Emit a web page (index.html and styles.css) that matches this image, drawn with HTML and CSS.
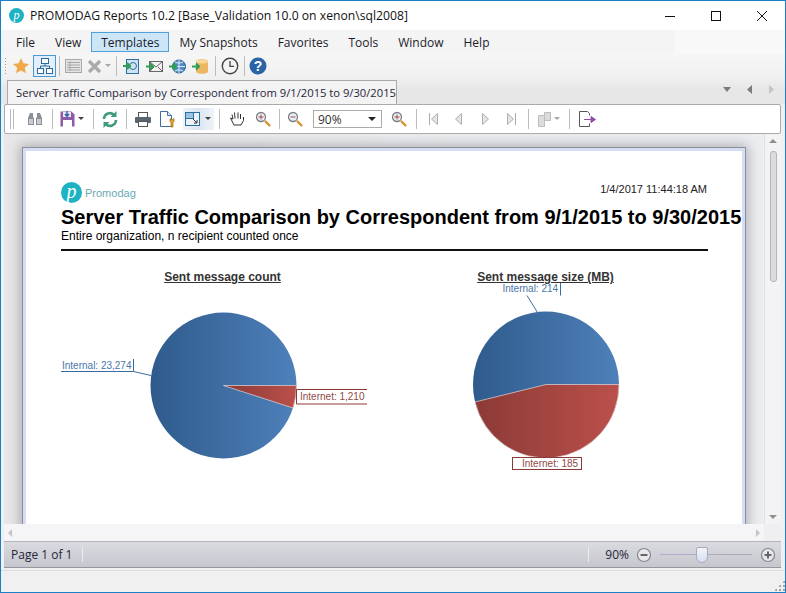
FILE: index.html
```html
<!DOCTYPE html>
<html lang="en">
<head>
<meta charset="utf-8">
<title>PROMODAG Reports</title>
<link rel="stylesheet" href="styles.css">
</head>
<body>
<div class="window">
  <header class="titlebar">
    <span class="app-logo">p</span>
    <span class="app-title">PROMODAG Reports 10.2 [Base_Validation 10.0 on xenon\sql2008]</span>
    <div class="win-buttons">
      <svg class="win-btn" width="46" height="29" viewBox="0 0 46 29"><path d="M18 15.5h10" stroke="#111" fill="none"/></svg>
      <svg class="win-btn" width="46" height="29" viewBox="0 0 46 29"><rect x="18.5" y="10.5" width="9" height="9" stroke="#111" fill="none"/></svg>
      <svg class="win-btn" width="46" height="29" viewBox="0 0 46 29"><path d="M18 10l10 10M28 10L18 20" stroke="#111" fill="none"/></svg>
    </div>
  </header>

  <nav class="menubar">
    <span class="menu-item">File</span>
    <span class="menu-item">View</span>
    <span class="menu-item active">Templates</span>
    <span class="menu-item">My Snapshots</span>
    <span class="menu-item">Favorites</span>
    <span class="menu-item">Tools</span>
    <span class="menu-item">Window</span>
    <span class="menu-item">Help</span>
  </nav>

  <div class="toolbar-main">
    <span class="grip-dots"></span>
    <span class="btn w24"><svg width="18" height="18" viewBox="0 0 18 18"><path d="M9 1l2.4 5.3 5.6.6-4.2 3.8 1.2 5.6L9 13.5 4 16.3l1.2-5.6L1 6.9l5.6-.6z" fill="#f0a94a"/></svg></span>
    <span class="btn w23 selected"><svg width="18" height="18" viewBox="0 0 18 18" fill="#fff" stroke="#2c6a9e"><rect x="5.5" y="1.5" width="7" height="5"/><rect x="1.5" y="11.5" width="6" height="5"/><rect x="10.5" y="11.5" width="6" height="5"/><path d="M9 6.5v2.5M4.5 11.5V9h9v2.5" fill="none"/></svg></span>
    <span class="sep s7"></span>
    <span class="btn w20"><svg width="17" height="16" viewBox="0 0 17 16"><rect x=".5" y="1.5" width="16" height="13" fill="#e4e4e4" stroke="#a8a8a8"/><path d="M2 4.5h13M2 7h13M2 9.5h13M2 12h13M5 3v10" stroke="#a8a8a8" fill="none"/></svg></span>
    <span class="btn w22"><svg width="15" height="15" viewBox="0 0 15 15"><path d="M2 2l11 11M13 2L2 13" stroke="#ababab" stroke-width="3.4" fill="none"/></svg></span>
    <span class="drop w7 muted"></span>
    <span class="sep s8"></span>
    <span class="btn w23"><svg width="17" height="17" viewBox="0 0 17 17"><rect x="3.5" y="1.5" width="12" height="14" fill="#cfe3f2" stroke="#2d6f9c"/><circle cx="10" cy="8" r="3.5" fill="none" stroke="#2d6f9c"/><path d="M0 8h6M4 5l3 3-3 3" stroke="#2e9e55" stroke-width="2" fill="none"/></svg></span>
    <span class="btn w23"><svg width="17" height="17" viewBox="0 0 17 17"><rect x="3.5" y="3.5" width="13" height="10" fill="#f2f2f2" stroke="#666"/><path d="M4 4l6 5 6-5M4 13l4-4M16 13l-4-4" stroke="#666" fill="none"/><path d="M0 8.500h6M4 5.500l3 3-3 3" stroke="#2e9e55" stroke-width="2" fill="none"/></svg></span>
    <span class="btn w23"><svg width="17" height="17" viewBox="0 0 17 17"><circle cx="10" cy="8.500" r="6.500" fill="#4f8cc4" stroke="#2a5f94"/><path d="M4 8.500h12M10 2v13M6 4c2.500 1.500 5.500 1.500 8 0M6 13c2.500-1.500 5.500-1.500 8 0" stroke="#dcecf8" fill="none"/><path d="M0 8.500h6M4 5.500l3 3-3 3" stroke="#2e9e55" stroke-width="2" fill="none"/></svg></span>
    <span class="btn w23"><svg width="17" height="17" viewBox="0 0 17 17"><path d="M4 3.500c0-3 12-3 12 0v10c0 3-12 3-12 0z" fill="#eeb562"/><ellipse cx="10" cy="3.500" rx="6" ry="2" fill="#f7d79e"/><path d="M0 8.500h6M4 5.500l3 3-3 3" stroke="#2e9e55" stroke-width="2" fill="none"/></svg></span>
    <span class="sep s7"></span>
    <span class="btn w22"><svg width="18" height="18" viewBox="0 0 18 18"><circle cx="9" cy="9" r="7.700" fill="#f4f4f4" stroke="#444" stroke-width="1.400"/><path d="M9 4v5.300h4" stroke="#444" stroke-width="1.300" fill="none"/></svg></span>
    <span class="sep s7"></span>
    <span class="btn w20"><svg width="18" height="18" viewBox="0 0 18 18"><circle cx="9" cy="9" r="8.500" fill="#2a64a6"/><text x="9" y="14" class="help-q">?</text></svg></span>
  </div>

  <div class="tabstrip">
    <div class="tab">
      <span class="tab-text">Server Traffic Comparison by Correspondent from 9/1/2015 to 9/30/2015</span>
      <svg width="10" height="10" viewBox="0 0 10 10"><path d="M1.500 1.500l7 7M8.500 1.500l-7 7" stroke="#8a8a8a" stroke-width="2.200" fill="none"/></svg>
    </div>
    <div class="tab-nav">
      <svg width="10" height="6" viewBox="0 0 10 6"><path d="M1 0h8L5 5z" fill="#7c7c7c"/></svg>
      <svg width="6" height="10" viewBox="0 0 6 10"><path d="M5 0v9L0 4.500z" fill="#7c7c7c"/></svg>
      <svg width="6" height="10" viewBox="0 0 6 10"><path d="M1 0v9l5-4.500z" fill="#c4c4c4"/></svg>
    </div>
  </div>

  <div class="toolbar-report">
    <span class="grip-lines"></span>
    <span class="btn w26"><svg width="16" height="16" viewBox="0 0 16 16"><path d="M3 2h3v4l1 1v7H1V7zM10 2h3l2 5v7H9V7l1-1z" fill="#8b8f96"/><path d="M2 8h4v5H2zM10 8h4v5h-4z" fill="#c8ccd2"/></svg></span>
    <span class="sep s8"></span>
    <span class="btn w22"><svg width="15" height="16" viewBox="0 0 15 16"><path d="M.5.500h11l3 3v12H.500z" fill="#8e5aa8"/><rect x="3" y="1" width="8" height="5" fill="#efe6f4"/><rect x="3" y="9" width="9" height="7" fill="#fff"/><path d="M7 0v4M5 3l2 2.500L9 3" stroke="#2a64a6" stroke-width="1.400" fill="none"/></svg></span>
    <span class="drop w7"></span>
    <span class="sep s16"></span>
    <span class="btn w18"><svg width="16" height="17" viewBox="0 0 16 17"><path d="M2 8a6 6 0 0 1 10.500-3.800M14 9a6 6 0 0 1-10.500 3.800" stroke="#3f9c7a" stroke-width="2.600" fill="none"/><path d="M14.500 0v6h-6zM1.500 17v-6h6z" fill="#3f9c7a"/></svg></span>
    <span class="sep s14"></span>
    <span class="btn w20"><svg width="16" height="15" viewBox="0 0 16 15"><rect x="3.500" y=".5" width="9" height="5" fill="#fff" stroke="#555"/><rect y="5" width="16" height="6" rx="1" fill="#5a6672"/><rect x="3.500" y="9.500" width="9" height="5" fill="#fff" stroke="#555"/></svg></span>
    <span class="btn w30"><svg width="17" height="17" viewBox="0 0 17 17"><path d="M.5.500h7l4 4v11H.500z" fill="#fff" stroke="#3a6ea5"/><path d="M7.500.500v4h4" fill="#dce9f5" stroke="#3a6ea5"/><path d="M10 7.500l2 1.500 2-1.500v3l-1 1v4.500h-2v-4.500l-1-1z" fill="#e8a521" stroke="#9b6a12" stroke-width=".7"/></svg></span>
    <span class="btn w31 view-btn"><svg width="15" height="14" viewBox="0 0 15 14"><rect x=".5" y=".5" width="14" height="13" fill="#eaf2fa" stroke="#2d6f9c"/><rect x=".5" y=".5" width="8" height="6" fill="#9cc3e4" stroke="#2d6f9c"/><path d="M8 7l4 4M12 8v3H9" stroke="#333" fill="none"/></svg><span class="drop inner"></span></span>
    <span class="sep s10"></span>
    <span class="btn w26"><svg width="16" height="16" viewBox="0 0 16 16"><path d="M4 8L3 3.500M6 7.500L5.500 1.500M9 7.500V1.500M11.500 8V3M4 8L1.500 7 5 14h7l2.500-4.500V6" fill="#fff" stroke="#333"/></svg></span>
    <span class="btn w26"><svg width="16" height="16" viewBox="0 0 16 16"><circle cx="6" cy="6" r="4.500" fill="#e8eef5" stroke="#7a7f87" stroke-width="1.300"/><path d="M3.500 6h5M6 3.500v5" stroke="#b2473f" fill="none"/><path d="M10 10l5 5" stroke="#d8902c" stroke-width="2.400"/></svg></span>
    <span class="sep s6"></span>
    <span class="btn w26"><svg width="16" height="16" viewBox="0 0 16 16"><circle cx="6" cy="6" r="4.500" fill="#e8eef5" stroke="#7a7f87" stroke-width="1.300"/><path d="M3.500 6h5" stroke="#b2473f" fill="none"/><path d="M10 10l5 5" stroke="#d8902c" stroke-width="2.400"/></svg></span>
    <div class="combo"><span>90%</span><span class="combo-arrow"></span></div>
    <span class="btn w26 push4"><svg width="16" height="16" viewBox="0 0 16 16"><circle cx="6" cy="6" r="4.500" fill="#e8eef5" stroke="#7a7f87" stroke-width="1.300"/><path d="M3.500 6h5M6 3.500v5" stroke="#b2473f" fill="none"/><path d="M10 10l5 5" stroke="#d8902c" stroke-width="2.400"/></svg></span>
    <span class="sep s8"></span>
    <span class="btn w26"><svg width="9" height="12" viewBox="0 0 9 12"><path d="M.5 0v12" stroke="#aaa"/><path d="M8.500.5v11l-6-5.500z" fill="#e4e4e4" stroke="#b0b0b0"/></svg></span>
    <span class="btn w24"><svg width="7" height="12" viewBox="0 0 7 12"><path d="M6.500.5v11L.500 6z" fill="#e4e4e4" stroke="#b0b0b0"/></svg></span>
    <span class="btn w30"><svg width="7" height="12" viewBox="0 0 7 12"><path d="M.5.500v11l6-5.500z" fill="#e4e4e4" stroke="#b0b0b0"/></svg></span>
    <span class="btn w22"><svg width="9" height="12" viewBox="0 0 9 12"><path d="M8.500 0v12" stroke="#aaa"/><path d="M.5.500v11l6-5.500z" fill="#e4e4e4" stroke="#b0b0b0"/></svg></span>
    <span class="sep s12"></span>
    <span class="btn w20"><svg width="13" height="15" viewBox="0 0 13 15"><path d="M.5 3.500h6v11h-6zM6.500.5h6v8h-6z" fill="#dcdcdc" stroke="#bdbdbd"/></svg></span>
    <span class="drop w7 muted"></span>
    <span class="sep s16"></span>
    <span class="btn w20"><svg width="17" height="16" viewBox="0 0 17 16"><path d="M10.500 4.500V2.500l-2-2h-8v15h10v-3" fill="#fff" stroke="#555"/><path d="M5 8.500h7V5.500l4.500 3-4.500 3V9" fill="#8e4fa8" stroke="#8e4fa8"/></svg></span>
  </div>

  <main class="viewer">
    <div class="viewport">
      <article class="page">
        <div class="report-top">
          <div class="brand">
            <span class="brand-mark">p</span>
            <span class="brand-name">Promodag</span>
          </div>
          <span class="report-date">1/4/2017 11:44:18 AM</span>
        </div>
        <h1 class="report-title">Server Traffic Comparison by Correspondent from 9/1/2015 to 9/30/2015</h1>
        <p class="report-sub">Entire organization, n recipient counted once</p>
        <div class="charts">
          <section class="chart">
            <h2 class="chart-title">Sent message count</h2>
            <svg class="chart-svg" width="323" height="200" viewBox="0 0 323 200">
              <defs>
                <linearGradient id="blue1"><stop offset="0" stop-color="#2f5b8c"/><stop offset="1" stop-color="#4e80ba"/></linearGradient>
                <linearGradient id="red1"><stop offset="0" stop-color="#8c3a36"/><stop offset="1" stop-color="#bb504b"/></linearGradient>
              </defs>
              <circle cx="162.500" cy="101.500" r="73" fill="url(#blue1)"/>
              <path d="M162.500 101.500H235.500A73 73 0 0 1 232 124z" fill="url(#red1)" stroke="#e6d8d8" stroke-width=".7"/>
              <path d="M0 87.500H72.500V75M72.500 87.500L90 91.500" class="lead-blue"/>
              <text x="1" y="85" class="lab-blue">Internal: 23,274</text>
              <path d="M306 105.500H235.500V120H306" class="lead-red"/>
              <text x="239" y="116" class="lab-red">Internet: 1,210</text>
            </svg>
          </section>
          <section class="chart">
            <h2 class="chart-title">Sent message size (MB)</h2>
            <svg class="chart-svg" width="323" height="200" viewBox="0 0 323 200">
              <circle cx="162" cy="100.500" r="73" fill="url(#blue1)"/>
              <path d="M162 100.500H235A73 73 0 0 1 91 118z" fill="url(#red1)" stroke="#e6d8d8" stroke-width=".7"/>
              <path d="M176.500 -1V11.500M143 11.500L153.500 28.500" class="lead-blue"/>
              <text x="118.500" y="8" class="lab-blue">Internal: 214</text>
              <rect x="128.500" y="173.500" width="69" height="12" class="lead-red"/>
              <text x="138" y="183" class="lab-red">Internet: 185</text>
            </svg>
          </section>
        </div>
      </article>
    </div>
    <div class="vscroll">
      <span class="arrow-up"></span>
      <span class="v-thumb"></span>
      <span class="arrow-down"></span>
    </div>
    <div class="hscroll">
      <span class="arrow-left"></span>
      <span class="arrow-right"></span>
    </div>
    <div class="corner"></div>
  </main>

  <div class="statusbar">
    <span class="page-info">Page 1 of 1</span>
    <span class="status-sep"></span>
    <span class="status-fill"></span>
    <span class="status-sep"></span>
    <span class="zoom-val">90%</span>
    <svg width="16" height="16" viewBox="0 0 16 16"><circle cx="8" cy="8" r="6.500" fill="#e9e9ec" stroke="#85858c" stroke-width="1.200"/><path d="M4.500 8h7" stroke="#65656c" stroke-width="2"/></svg>
    <div class="slider"><span class="slider-thumb"></span></div>
    <svg width="16" height="16" viewBox="0 0 16 16"><circle cx="8" cy="8" r="6.500" fill="#e9e9ec" stroke="#85858c" stroke-width="1.200"/><path d="M4.500 8h7M8 4.500v7" stroke="#65656c" stroke-width="2"/></svg>
  </div>
  <footer class="bottombar"><span class="resize-grip"></span></footer>
</div>
</body>
</html>
```
FILE: styles.css
```css
* { box-sizing: border-box; }
html, body { margin: 0; padding: 0; }
body { width: 786px; height: 593px; overflow: hidden; background: #f0f0f0; }

.window {
  width: 786px; height: 593px;
  border: 1px solid #1a7fc6;
  display: flex; flex-direction: column;
  font-family: "Open Sans", "Noto Sans", sans-serif;
  font-size: 12px; color: #1c1c2a;
  background: #f0f0f0;
}

.titlebar { height: 29px; flex: none; display: flex; align-items: center; background: #fff; padding-left: 8px; }
.app-logo {
  width: 15px; height: 15px; border-radius: 50%;
  background: #1db3c4; color: #fff;
  font: italic 12px/14px "Liberation Serif", serif;
  text-align: center; flex: none;
}
.app-title { margin-left: 6px; white-space: nowrap; font-size: 12.2px; color: #111; }
.win-buttons { margin-left: auto; display: flex; margin-right: 0; }
.win-btn { display: block; }

.menubar { height: 24px; flex: none; display: flex; align-items: center; padding-left: 5px; background: linear-gradient(90deg, #f4f4f4 0 86%, #f8f8f8 86%); }
.menu-item { padding: 0 9px; height: 20px; line-height: 19px; border: 1px solid transparent; margin-right: 0; white-space: nowrap; }
.menu-item.active { background: #cde6f7; border-color: #4fa0dc; margin: 0; }

.toolbar-main { height: 24px; flex: none; display: flex; align-items: center; background: linear-gradient(#f6f6f6, #f0f0f0); }
.grip-dots { width: 8px; height: 18px; flex: none; margin-left: 0; background: radial-gradient(circle, #9c9c9c 0 1px, transparent 1px) 3px 0 / 3px 3px repeat-y; }

.btn { display: flex; align-items: center; justify-content: center; flex: none; height: 22px; }
.w18 { width: 18px; } .w20 { width: 20px; } .w22 { width: 22px; } .w23 { width: 23px; }
.w24 { width: 24px; } .w26 { width: 26px; } .w30 { width: 30px; } .w31 { width: 31px; }
.selected { background: #e3f0fb; border: 1px solid #4f97cf; }

.sep { height: 20px; flex: none; display: block; background: linear-gradient(#bcbcbc, #bcbcbc) center / 1px 100% no-repeat; }
.s6 { width: 6px; } .s7 { width: 7px; } .s8 { width: 8px; } .s10 { width: 10px; }
.s12 { width: 12px; } .s14 { width: 14px; } .s16 { width: 16px; }

.drop { height: 22px; flex: none; background: linear-gradient(135deg, #333 50%, transparent 50%) center / 0 0 no-repeat; position: relative; }
.w7 { width: 7px; }
.drop::after {
  content: ""; position: absolute; left: 0; top: 9px;
  border-left: 3.5px solid transparent; border-right: 3.5px solid transparent; border-top: 3.5px solid #404040;
}
.drop.muted::after { border-top-color: #a8a8a8; }
.drop.inner { width: 7px; margin-left: 5px; }

.help-q { font: bold 14px "Liberation Sans", sans-serif; fill: #fff; text-anchor: middle; }

.tabstrip { height: 26px; flex: none; display: flex; align-items: flex-end; justify-content: space-between; padding-left: 6px; background: linear-gradient(#f0f0f0, #e7e7e7 40%); }
.tab {
  width: 390px; height: 24px; background: #f3f3f3;
  border: 1px solid #a9a9a9; border-bottom: 0;
  display: flex; align-items: center; justify-content: space-between; padding: 0 6px 0 8px;
}
.tab-text { white-space: nowrap; font-size: 11.2px; color: #26263a; }
.tab-nav { display: flex; align-items: center; gap: 15px; height: 24px; padding-bottom: 4px; padding-right: 11px; }

.toolbar-report {
  height: 30px; flex: none; margin: 0 4px 0 3px;
  background: #fff; border: 1px solid #ababab; border-radius: 2px;
  display: flex; align-items: center;
}
.grip-lines { width: 17px; height: 20px; flex: none; background: linear-gradient(90deg, transparent 5px, #bbb 5px 6px, transparent 6px 8px, #bbb 8px 9px, transparent 9px); }
.view-btn { background: linear-gradient(90deg, #eef3f9, #dbe6f2 50%, #eef3f9); }
.combo {
  width: 69px; height: 18px; flex: none; margin-left: 5px;
  border: 1px solid #ababab; background: #fff;
  display: flex; align-items: center; justify-content: space-between; padding: 0 5px 0 4px;
  font-size: 12px; color: #333;
}
.combo-arrow { border-left: 4px solid transparent; border-right: 4px solid transparent; border-top: 4px solid #222; }
.push4 { margin-left: 4px; }

.viewer {
  flex: none; height: 407px; margin: 0 4px 0 3px;
  display: grid; grid-template-columns: 760px 17px; grid-template-rows: 390px 17px;
}
.viewport { overflow: hidden; background: linear-gradient(90deg, #e8e8ea, #eceef1 60%); padding: 14px 0 0 19px; }
.page {
  width: 722px; height: 500px; background: #fff;
  border: 3px solid #d4ddf3; border-top: 3px solid #d4ddf3;
  outline: 1px solid #8f9097;
  box-shadow: 0 0 12px 3px rgba(60, 60, 70, .35);
  padding: 31px 34px 0 35px;
  font-family: "Liberation Sans", Arial, sans-serif; color: #000;
}
.report-top { display: flex; justify-content: space-between; align-items: flex-start; height: 22px; }
.brand { display: flex; align-items: center; gap: 3px; }
.brand-mark {
  width: 21px; height: 21px; border-radius: 50%; background: #1db3c4; color: #fff;
  font: italic 20px/19px "Liberation Serif", serif; text-align: center;
}
.brand-name { font-size: 11px; color: #6ba9b5; }
.report-date { font-size: 11px; color: #222; margin-top: 1px; margin-right: 1px; }
.report-title { margin: 1px 0 0; font-size: 20px; line-height: 24px; font-weight: bold; white-space: nowrap; }
.report-sub { margin: 0; font-size: 12px; line-height: 15px; padding-bottom: 5px; border-bottom: 2px solid #111; }
.charts { display: grid; grid-template-columns: 323px 323px; margin-top: 0; }
.chart { height: 240px; }
.chart-title { margin: 19px 0 0; height: 14px; font-size: 12px; line-height: 14px; font-weight: bold; text-align: center; color: #333; text-decoration: underline; }
.chart-svg { display: block; overflow: visible; }
.lead-blue { fill: none; stroke: #3e6b9f; stroke-width: 1; }
.lead-red { fill: none; stroke: #8a3a36; stroke-width: 1; }
.lab-blue { font: 10px "Liberation Sans", Arial, sans-serif; fill: #4a76a8; }
.lab-red { font: 10px "Liberation Sans", Arial, sans-serif; fill: #8f4b47; }

.vscroll { background: #f3f3f5; border-left: 1px solid #e2e2e4; display: flex; flex-direction: column; align-items: center; position: relative; }
.arrow-up { margin-top: 5px; border-left: 4px solid transparent; border-right: 4px solid transparent; border-bottom: 4px solid #8f8f8f; }
.v-thumb { margin-top: 8px; width: 7px; height: 131px; border-radius: 3px; background: #dcdce0; border: 1px solid #b6b6ba; }
.arrow-down { margin-top: auto; margin-bottom: 5px; border-left: 4px solid transparent; border-right: 4px solid transparent; border-top: 4px solid #8f8f8f; }
.hscroll { background: #f5f5f7; display: flex; align-items: center; justify-content: space-between; padding: 0 4px; }
.arrow-left { border-top: 4px solid transparent; border-bottom: 4px solid transparent; border-right: 4px solid #c4c4c4; }
.arrow-right { border-top: 4px solid transparent; border-bottom: 4px solid transparent; border-left: 4px solid #c4c4c4; }
.corner { background: #efeff1; }

.statusbar {
  height: 27px; flex: none; margin: 0 4px 0 3px;
  display: flex; align-items: center;
  background: linear-gradient(#dadbe0, #c6c7ce);
  border-top: 1px solid #b4b5bb; border-bottom: 1px solid #96979d;
}
.page-info { margin-left: 7px; color: #26263a; }
.status-sep { width: 1px; height: 15px; background: #ecedf0; margin-left: 10px; flex: none; }
.status-fill { flex: 1; }
.zoom-val { margin: 0 7px 0 16px; color: #26263a; }
.slider { width: 92px; height: 1px; background: linear-gradient(90deg, #b9a9d0, #a9a9b2); margin: 0 8px 0 8px; position: relative; flex: none; }
.slider-thumb {
  position: absolute; left: 36px; top: -7px; width: 12px; height: 16px;
  background: linear-gradient(#f1f3fb, #d7dff3);
  border: 1px solid #a9aab4; border-radius: 2px 2px 6px 6px;
}
.statusbar > svg:last-child { margin-right: 5px; flex: none; }

.bottombar { flex: 1; margin-top: 2px; border-top: 1px solid #dcdcdc; background: #f0f0f0; position: relative; }
.resize-grip {
  position: absolute; right: 0; bottom: 1px; width: 11px; height: 11px;
  background: radial-gradient(circle, #a0a0a0 0 1px, transparent 1.2px) 0 0 / 4px 4px;
  clip-path: polygon(100% 0, 100% 100%, 0 100%);
}
```
